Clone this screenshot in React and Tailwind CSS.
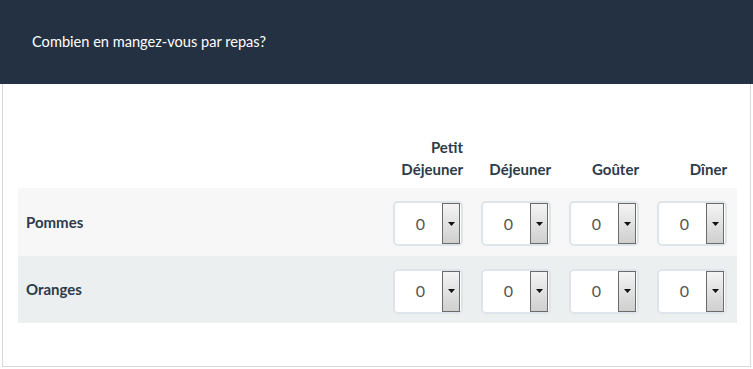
import React from "react";

const meals = [
  { label: ["Petit", "Déjeuner"] },
  { label: ["Déjeuner"] },
  { label: ["Goûter"] },
  { label: ["Dîner"] },
];

const fruits = [
  { name: "Pommes", bg: "bg-[#f7f7f7]", h: "h-[68px]" },
  { name: "Oranges", bg: "bg-[#ebeff0]", h: "h-[67px]" },
];

function QtySelect() {
  return (
    <div className="mt-[3px] w-[70px] h-[45px] bg-white border-2 border-[#dde4ea] rounded-[5px] flex items-stretch font-normal">
      <div className="flex-1 flex items-center justify-center text-[16px] text-[#555] pl-[4px]">0</div>
      <div className="w-[18px] mr-[1px] border border-[#6b6b6b] bg-gradient-to-b from-[#f4f4f4] to-[#cfcfcf] flex items-center justify-center">
        <svg width="7" height="4" viewBox="0 0 7 4">
          <path d="M0 0h7L3.5 4z" fill="#111" />
        </svg>
      </div>
    </div>
  );
}

export default function App() {
  return (
    <div className="w-[753px] h-[369px] bg-white font-['Lato','Noto_Sans',sans-serif]">
      {/* Header */}
      <div className="h-[84px] bg-[#243142] flex items-center pl-[32px]">
        <h1 className="text-white text-[14.6px]">Combien en mangez-vous par repas?</h1>
      </div>

      {/* Body */}
      <div className="mx-[2px] h-[283px] border-x border-b border-[#d8d8d8] pt-[52px] pl-[15px]">
        <div className="grid grid-cols-[367px_repeat(4,88px)] text-[#2c3a4a] text-[15px] font-bold">
          <div />
          {meals.map((m, i) => (
            <div key={i} className="flex flex-col justify-end items-end pr-[10px] pb-[8px] leading-[22px]">
              {m.label.map((l) => (
                <span key={l}>{l}</span>
              ))}
            </div>
          ))}

          {fruits.map((f) => (
            <React.Fragment key={f.name}>
              <div className={`${f.bg} ${f.h} flex items-center pl-[8px]`}>{f.name}</div>
              {meals.map((m, i) => (
                <div key={i} className={`${f.bg} ${f.h} flex items-center pl-[8px]`}>
                  <QtySelect />
                </div>
              ))}
            </React.Fragment>
          ))}
        </div>
      </div>
    </div>
  );
}
